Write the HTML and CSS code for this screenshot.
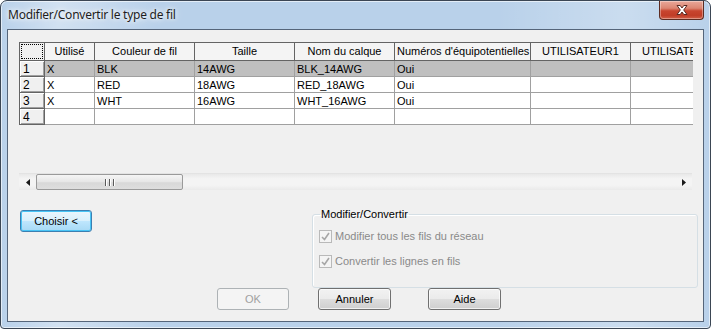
FILE: index.html
```html
<!DOCTYPE html>
<html>
<head>
<meta charset="utf-8">
<link rel="stylesheet" href="styles.css">
</head>
<body>
<div class="window">
  <div class="titlebar">
    <span class="title">Modifier/Convertir le type de fil</span>
    <span class="close">
      <svg width="16" height="12" viewBox="0 0 16 12"><path d="M3 1.5 L6.2 1.5 L8 4 L9.8 1.5 L13 1.5 L9.7 6 L13 10.5 L9.8 10.5 L8 8 L6.2 10.5 L3 10.5 L6.3 6 Z" fill="#fff" stroke="#5a2a22" stroke-width="1" stroke-linejoin="round"/></svg>
    </span>
  </div>
  <div class="client">
    <div class="gridbox">
      <div class="gridview">
        <table class="grid">
          <colgroup>
            <col style="width:25px"><col style="width:50px"><col style="width:100px"><col style="width:100px"><col style="width:100px"><col style="width:136px"><col style="width:100px"><col style="width:100px">
          </colgroup>
          <thead>
            <tr>
              <th class="corner"><span class="dots"></span></th>
              <th>Utilisé</th><th>Couleur de fil</th><th>Taille</th><th>Nom du calque</th><th>Numéros d'équipotentielles</th><th>UTILISATEUR1</th><th>UTILISATEUR2</th>
            </tr>
          </thead>
          <tbody>
            <tr class="sel"><td class="rh">1</td><td>X</td><td>BLK</td><td>14AWG</td><td>BLK_14AWG</td><td>Oui</td><td></td><td></td></tr>
            <tr><td class="rh">2</td><td>X</td><td>RED</td><td>18AWG</td><td>RED_18AWG</td><td>Oui</td><td></td><td></td></tr>
            <tr><td class="rh">3</td><td>X</td><td>WHT</td><td>16AWG</td><td>WHT_16AWG</td><td>Oui</td><td></td><td></td></tr>
            <tr><td class="rh">4</td><td></td><td></td><td></td><td></td><td></td><td></td><td></td></tr>
          </tbody>
        </table>
      </div>
      <div class="hscroll">
        <span class="arrow"><svg width="4" height="7" viewBox="0 0 4 7"><path d="M4 0 L0 3.5 L4 7 Z" fill="#1a1a1a"/></svg></span>
        <span class="thumb"><span class="grip"><i></i><i></i><i></i></span></span>
        <span class="track"></span>
        <span class="arrow"><svg width="4" height="7" viewBox="0 0 4 7"><path d="M0 0 L4 3.5 L0 7 Z" fill="#1a1a1a"/></svg></span>
      </div>
    </div>
    <div class="lower">
      <div class="leftcol">
        <button class="btn default">Choisir &lt;</button>
      </div>
      <fieldset class="group">
        <legend>Modifier/Convertir</legend>
        <label class="chk"><span class="box"><svg width="9" height="9" viewBox="0 0 9 9"><path d="M1 5 L3.5 7.5 L8 1" fill="none" stroke="#a6a6a6" stroke-width="1.6"/></svg></span>Modifier tous les fils du réseau</label>
        <label class="chk"><span class="box"><svg width="9" height="9" viewBox="0 0 9 9"><path d="M1 5 L3.5 7.5 L8 1" fill="none" stroke="#a6a6a6" stroke-width="1.6"/></svg></span>Convertir les lignes en fils</label>
      </fieldset>
    </div>
    <div class="buttons">
      <button class="btn disabled">OK</button>
      <button class="btn annuler">Annuler</button>
      <button class="btn aide">Aide</button>
    </div>
  </div>
</div>
</body>
</html>
```

FILE: styles.css
```css
html, body {
  margin: 0;
  padding: 0;
  width: 711px;
  height: 329px;
  overflow: hidden;
  background: #ffffff;
}

.window {
  box-sizing: border-box;
  width: 711px;
  height: 329px;
  border: 1px solid #3b4654;
  border-radius: 7px 7px 4px 4px;
  background:
    linear-gradient(90deg, rgba(255,255,255,0.0) 0%, rgba(255,255,255,0.35) 8%, rgba(255,255,255,0) 22%, rgba(255,255,255,0) 70%, rgba(255,255,255,0.25) 88%, rgba(255,255,255,0) 100%),
    #b9d1ea;
  display: flex;
  flex-direction: column;
  font-family: "Liberation Sans", Arial, sans-serif;
  box-shadow: inset 0 0 0 1px rgba(255,255,255,0.6);
}

.titlebar {
  height: 28px;
  display: flex;
  justify-content: space-between;
  align-items: flex-start;
}

.title {
  font-family: "Noto Sans", "Open Sans", sans-serif;
  font-size: 12px;
  letter-spacing: -0.25px;
  color: #1e1e1e;
  margin: 6px 0 0 7px;
  line-height: 16px;
  text-shadow: 0 0 8px #ffffff, 0 0 4px #ffffff;
}

.close {
  width: 45px;
  height: 19px;
  margin: 0 6px 0 0;
  box-sizing: border-box;
  border: 1px solid #5d2c22;
  border-top: none;
  border-radius: 0 0 4px 4px;
  background: linear-gradient(#e9a89a 0%, #dc8672 40%, #c8452f 55%, #c13d27 80%, #d16048 100%);
  display: flex;
  align-items: center;
  justify-content: center;
  box-shadow: inset 0 0 0 1px rgba(255,255,255,0.35);
}

.client {
  flex: 1;
  margin: 0 6px 6px 6px;
  border: 1px solid #55657a;
  background: #f0f0f0;
  padding: 12px 0 0 11px;
  display: flex;
  flex-direction: column;
}

.gridbox {
  width: 674px;
  height: 148px;
  display: flex;
  flex-direction: column;
}

.gridview {
  height: 133px;
  overflow: hidden;
}

.grid {
  table-layout: fixed;
  border-collapse: collapse;
  width: 711px;
  font-size: 11px;
  color: #000;
}

.grid th {
  height: 17px;
  padding: 0 2px;
  font-weight: normal;
  text-align: center;
  white-space: nowrap;
  overflow: hidden;
  background: #f4f4f4;
  border: 1px solid #646464;
  line-height: 15px;
}

.grid th.corner {
  background: #f0f0f0;
  position: relative;
}

.dots {
  position: absolute;
  left: 1px;
  top: 1px;
  right: 1px;
  bottom: 1px;
  border: 1px dotted #000;
}

.grid td {
  height: 15px;
  padding: 0 2px;
  line-height: 14px;
  white-space: nowrap;
  overflow: hidden;
  background: #ffffff;
  border: 1px solid #a0a0a0;
}

.grid tr.sel td {
  background: #bfbfbf;
}

.grid td.rh {
  background: #f0f0f0;
  border: 1px solid #646464;
  box-shadow: inset 1px 1px 0 #ffffff, inset -1px -1px 0 #a0a0a0;
  font-size: 12px;
  padding: 0 3px;
}

.grid tr.sel td.rh {
  background: #f0f0f0;
}

.hscroll {
  height: 16px;
  margin-top: -1px;
  width: 673px;
  display: flex;
  align-items: stretch;
  background: linear-gradient(#e8e8e8, #f4f4f4 30%, #f4f4f4 70%, #eaeaea);
  border-top: 1px solid #e3e3e3;
}

.arrow {
  width: 17px;
  display: flex;
  align-items: center;
  justify-content: center;
}

.thumb {
  width: 147px;
  box-sizing: border-box;
  border: 1px solid #9a9a9a;
  border-radius: 2px;
  background: linear-gradient(#f5f5f5, #e6e6e6 50%, #d8d8d8 55%, #dedede);
  display: flex;
  align-items: center;
  justify-content: center;
}

.grip {
  display: flex;
  gap: 2px;
}

.grip i {
  display: block;
  width: 1px;
  height: 7px;
  background: #5a5a5a;
  border-right: 1px solid #ffffff;
}

.track {
  flex: 1;
}

.lower {
  display: flex;
  margin-top: 20px;
  height: 78px;
}

.leftcol {
  width: 293px;
}

.btn {
  box-sizing: border-box;
  height: 22px;
  width: 73px;
  font-family: "Liberation Sans", Arial, sans-serif;
  font-size: 11px;
  font-weight: normal;
  color: #000;
  border: 1px solid #707070;
  border-radius: 3px;
  background: linear-gradient(#f2f2f2 0%, #ebebeb 48%, #dddddd 52%, #cfcfcf 100%);
  box-shadow: inset 0 0 0 1px rgba(255,255,255,0.7);
  padding: 0;
  margin: 0;
}

.btn.default {
  margin-left: 1px;
  border-color: #3c7fb1;
  background: linear-gradient(#eaf6fd 0%, #d9f0fc 48%, #bee6fd 52%, #a7d9f5 100%);
  box-shadow: inset 0 0 0 1px #48c4f5;
  width: 72px;
}

.group {
  box-sizing: border-box;
  width: 386px;
  height: 80px;
  margin: -2px 0 0 0;
  padding: 0 0 0 6px;
  border: 1px solid #d5dfe5;
  border-radius: 3px;
  box-shadow: inset 1px 1px 0 #ffffff;
  display: flex;
  flex-direction: column;
}

.group legend {
  font-size: 11px;
  padding: 0 1px;
  margin-left: 1px;
  color: #000;
}

.chk {
  display: flex;
  align-items: center;
  font-size: 11px;
  line-height: 13px;
  color: #8a8a8a;
  height: 13px;
  margin-top: 10px;
}

.chk + .chk {
  margin-top: 12px;
}

.box {
  box-sizing: border-box;
  width: 13px;
  height: 13px;
  border: 1px solid #b9b9b9;
  background: #f4f4f4;
  display: flex;
  align-items: center;
  justify-content: center;
  margin-right: 3px;
}

.buttons {
  display: flex;
  margin-top: 0px;
  padding-left: 198px;
}

.btn.disabled {
  width: 72px;
  color: #a0a0a0;
  border-color: #adb2b5;
  background: #f4f4f4;
  box-shadow: none;
}

.btn.annuler {
  margin-left: 29px;
}

.btn.aide {
  margin-left: 37px;
}
```
